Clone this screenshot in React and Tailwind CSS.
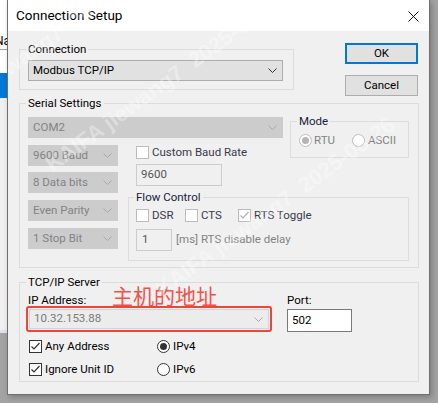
import React from 'react';

const Chevron = ({ color = '#333' }) => (
  <svg width="9" height="5" viewBox="0 0 9 5" className="shrink-0">
    <path d="M0.5 0.5 L4.5 4.5 L8.5 0.5" fill="none" stroke={color} strokeWidth="1" />
  </svg>
);

const Combo = ({ text, className = '', disabled }) => (
  <div
    className={`flex items-center justify-between h-[21px] pl-[4px] pr-[5px] border ${
      disabled ? 'bg-[#cccccc] border-[#cccccc] text-[#838383]' : 'bg-[#e1e1e1] border-[#adadad] text-black'
    } ${className}`}
  >
    <span>{text}</span>
    <Chevron color={disabled ? '#a8a8a8' : '#333'} />
  </div>
);

const Check = ({ checked, tone = 'dark' }) => {
  const border = tone === 'dark' ? 'border-[#333333]' : 'border-[#bcbcbc]';
  const stroke = tone === 'dark' ? '#333' : '#b0b0b0';
  return (
    <div className={`size-[13px] shrink-0 border bg-white ${border}`}>
      {checked && (
        <svg width="11" height="11" viewBox="0 0 11 11">
          <path d="M1.5 5.5 L4 8 L9.5 2" fill="none" stroke={stroke} strokeWidth="1.2" />
        </svg>
      )}
    </div>
  );
};

const Radio = ({ checked, tone = 'dark' }) => (
  <div
    className={`size-[13px] shrink-0 rounded-full border flex items-center justify-center bg-white ${
      tone === 'dark' ? 'border-[#333333]' : 'border-[#bcbcbc]'
    }`}
  >
    {checked && (
      <div className={`size-[7px] rounded-full ${tone === 'dark' ? 'bg-[#333333]' : 'bg-[#b5b5b5]'}`} />
    )}
  </div>
);

const Group = ({ label, className = '', children, labelColor = 'text-black' }) => (
  <fieldset className={`border border-[#dcdcdc] px-[8px] ${className}`}>
    <legend className={`px-[2px] -ml-[2px] leading-[14px] ${labelColor}`}>{label}</legend>
    {children}
  </fieldset>
);

const Watermark = ({ className }) => (
  <div
    className={`absolute whitespace-nowrap text-[22px] font-bold text-white/35 -rotate-[36deg] origin-left font-['Liberation_Sans',sans-serif] ${className}`}
  >
    KAIFA jiewang7&nbsp;&nbsp;2025-08-26
  </div>
);

export default function App() {
  return (
    <div className="relative w-[438px] h-[403px] overflow-hidden bg-[#a3a3a3] flex items-start font-['Roboto',sans-serif] text-[11.5px] text-black">
      {/* app behind dialog */}
      <div className="w-[7px] h-[403px] flex flex-col shrink-0">
        <div className="h-[49px] bg-white relative overflow-hidden">
          <span className="absolute left-[-5px] top-[32px] text-[12px]">Na</span>
        </div>
        <div className="h-px bg-[#a0a0a0]" />
        <div className="h-[23px] bg-white" />
        <div className="h-[25px] bg-[#0078d7]" />
        <div className="h-[232px] bg-[#f0f0f0]" />
        <div className="h-[3px] bg-[#dde4ee]" />
        <div className="flex-1 bg-[#a3a3a3]" />
      </div>

      {/* dialog */}
      <div className="relative w-[423px] h-[395px] border-x border-b border-[#6e6e6e] bg-[#f0f0f0] flex flex-col shadow-[2px_2px_6px_rgba(0,0,0,0.25)]">
        <div className="h-[31px] bg-white flex items-center pl-[8px] pr-[10px] shrink-0">
          <span className="text-[13.5px] leading-none mt-[1px]">Connection Setup</span>
          <svg width="11" height="11" viewBox="0 0 11 11" className="ml-auto mt-[1px]">
            <path d="M0.5 0.5 L10.5 10.5 M10.5 0.5 L0.5 10.5" stroke="#111" strokeWidth="1" />
          </svg>
        </div>

        <div className="flex flex-col pl-[11px] pt-[11px]">
          {/* top row */}
          <div className="flex items-start h-[54px]">
            <Group label="Connection" className="w-[275px] pt-[4px] pb-[8px]">
              <Combo text="Modbus TCP/IP" className="w-[255px] h-[21px]" />
            </Group>
            <div className="ml-[51px] mt-[1px] flex flex-col gap-[11px]">
              <button className="w-[73px] h-[21px] bg-[#e1e1e1] border-2 border-[#0078d7] flex items-center justify-center">
                OK
              </button>
              <button className="w-[73px] h-[21px] bg-[#e1e1e1] border border-[#adadad] flex items-center justify-center">
                Cancel
              </button>
            </div>
          </div>

          {/* serial settings */}
          <Group label="Serial Settings" className="w-[400px] pt-[7px] pb-[6px]">
            <div className="flex items-start h-[21px]">
              <Combo text="COM2" disabled className="w-[255px]" />
              <Group label="Mode" labelColor="text-[#1b1b3a]" className="ml-[7px] -mt-[3px] w-[119px] pt-[5px] pb-[9px] bg-[#f0f0f0] relative">
                <div className="flex items-center h-[15px] text-[#838383]">
                  <div className="flex items-center gap-[2px] w-[53px]">
                    <Radio checked tone="grey" />
                    <span>RTU</span>
                  </div>
                  <div className="flex items-center gap-[3px]">
                    <Radio tone="grey" />
                    <span>ASCII</span>
                  </div>
                </div>
              </Group>
            </div>

            <div className="flex items-start mt-[7px]">
              <div className="flex flex-col w-[90px]">
                <Combo text="9600 Baud" disabled />
                <Combo text="8 Data bits" disabled className="mt-[6px]" />
                <Combo text="Even Parity" disabled className="mt-[7px]" />
                <Combo text="1 Stop Bit" disabled className="mt-[7px]" />
              </div>
              <div className="flex flex-col ml-[10px]">
                <div className="flex items-center gap-[3px] pl-[8px] h-[15px] text-[#3a3a4a]">
                  <Check tone="light" />
                  <span>Custom Baud Rate</span>
                </div>
                <div className="ml-[8px] mt-[4px] w-[86px] h-[22px] border border-[#cccccc] bg-[#f0f0f0] flex items-center pl-[4px] text-[#555]">
                  9600
                </div>
                <Group label="Flow Control" labelColor="text-[#1b1b3a]" className="mt-[4px] w-[281px] pl-[7px] pt-[4px] pb-[9px]">
                  <div className="flex items-center h-[15px] text-[#3a3a4a]">
                    <div className="flex items-center gap-[3px] w-[49px]">
                      <Check tone="light" />
                      <span>DSR</span>
                    </div>
                    <div className="flex items-center gap-[3px] w-[53px]">
                      <Check tone="light" />
                      <span>CTS</span>
                    </div>
                    <div className="flex items-center gap-[3px]">
                      <Check checked tone="light" />
                      <span>RTS Toggle</span>
                    </div>
                  </div>
                  <div className="flex items-center mt-[6px] h-[22px] text-[#838383]">
                    <div className="w-[36px] h-[22px] border border-[#cccccc] bg-[#f0f0f0] flex items-center pl-[5px] text-[#555]">
                      1
                    </div>
                    <span className="ml-[4px]">[ms] RTS disable delay</span>
                  </div>
                </Group>
              </div>
            </div>
          </Group>

          {/* tcp/ip */}
          <Group label="TCP/IP Server" className="mt-[7px] w-[400px] pt-[4px] pb-[4px]">
            <div className="flex items-start">
              <div className="flex flex-col w-[241px]">
                <div className="relative h-[14px] leading-[14px]">
                  IP Address:
                  <span className="absolute left-[84px] -top-[10px] text-[21px] leading-[24px] text-[#f0524c] font-['Noto_Sans_CJK_SC',sans-serif] whitespace-nowrap">
                    主机的地址
                  </span>
                </div>
                <div className="relative mt-[2px] ml-[1px] w-[240px] h-[20px]">
                  <div className="w-full h-full border border-[#d4d4d4] bg-[#ececec] flex items-center justify-between pl-[4px] pr-[5px] text-[#7a7a7a]">
                    <span>10.32.153.88</span>
                    <Chevron color="#a8a8a8" />
                  </div>
                  <div className="absolute -inset-[3px] border-2 border-[#e8473e] rounded-[3px]" />
                </div>
              </div>
              <div className="flex flex-col ml-[18px]">
                <div className="h-[14px] leading-[14px]">Port:</div>
                <div className="mt-[2px] w-[65px] h-[23px] border border-[#7a7a7a] bg-white flex items-center pl-[4px]">
                  502
                </div>
              </div>
            </div>
            <div className="flex mt-[7px]">
              <div className="flex flex-col gap-[8px] w-[129px] pl-[1px]">
                <div className="flex items-center gap-[3px] h-[15px]">
                  <Check checked />
                  <span>Any Address</span>
                </div>
                <div className="flex items-center gap-[3px] h-[15px]">
                  <Check checked />
                  <span>Ignore Unit ID</span>
                </div>
              </div>
              <div className="flex flex-col gap-[8px]">
                <div className="flex items-center gap-[3px] h-[15px]">
                  <Radio checked />
                  <span>IPv4</span>
                </div>
                <div className="flex items-center gap-[3px] h-[15px]">
                  <Radio />
                  <span>IPv6</span>
                </div>
              </div>
            </div>
          </Group>
        </div>

        {/* watermark overlay */}
        <div className="absolute inset-0 pointer-events-none overflow-hidden">
          <Watermark className="left-[40px] top-[150px]" />
          <Watermark className="left-[150px] top-[275px]" />
          <Watermark className="left-[-80px] top-[110px]" />
        </div>
      </div>
    </div>
  );
}
